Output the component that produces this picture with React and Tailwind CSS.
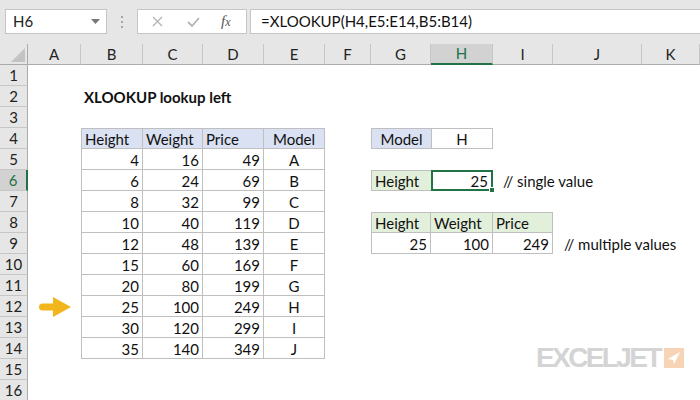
import React from 'react'

// Excel-style sheet: XLOOKUP lookup left

const COLS = ['A', 'B', 'C', 'D', 'E', 'F', 'G', 'H', 'I', 'J', 'K']

const DATA = [
  [4, 16, 49, 'A'],
  [6, 24, 69, 'B'],
  [8, 32, 99, 'C'],
  [10, 40, 119, 'D'],
  [12, 48, 139, 'E'],
  [15, 60, 169, 'F'],
  [20, 80, 199, 'G'],
  [25, 100, 249, 'H'],
  [30, 120, 299, 'I'],
  [35, 140, 349, 'J'],
]

const BASE = 'flex items-center pt-[2px] px-[3px] whitespace-nowrap text-[15px] text-[#111]'
const B = 'border-[#bfbfbf]'

// build the cell map once
const cells = {}
cells.B2 = { v: 'XLOOKUP lookup left', cls: 'font-bold text-[14px]' }
;['Height', 'Weight', 'Price'].forEach((h, i) => {
  cells[COLS[i + 1] + 4] = { v: h, cls: `bg-[#d9e1f2] border-r border-b border-t ${B} ${i === 0 ? 'border-l' : ''}` }
})
cells.E4 = { v: 'Model', cls: `bg-[#d9e1f2] justify-center border-r border-b border-t ${B}` }
DATA.forEach((row, ri) => {
  const r = ri + 5
  row.forEach((v, ci) => {
    const col = COLS[ci + 1]
    cells[col + r] = {
      v,
      cls: `${ci === 3 ? 'justify-center' : 'justify-end'} border-r border-b ${B} ${ci === 0 ? 'border-l' : ''}`,
    }
  })
})
cells.G4 = { v: 'Model', cls: `bg-[#d9e1f2] justify-center border border-r-0 ${B}` }
cells.H4 = { v: 'H', cls: `justify-center border ${B}` }
cells.G6 = { v: 'Height', cls: `bg-[#e2efda] border border-r-0 ${B}` }
cells.H6 = { v: 25, cls: 'justify-end relative border-2 border-[#217346]', active: true }
cells.I6 = { v: '// single value', cls: 'pl-[10px] text-[#8a8a8a]' }
cells.G8 = { v: 'Height', cls: `bg-[#e2efda] border-l border-t border-r border-b ${B}` }
cells.H8 = { v: 'Weight', cls: `bg-[#e2efda] border-t border-r border-b ${B}` }
cells.I8 = { v: 'Price', cls: `bg-[#e2efda] border-t border-r border-b ${B}` }
cells.G9 = { v: 25, cls: `justify-end border-l border-r border-b ${B}` }
cells.H9 = { v: 100, cls: `justify-end border-r border-b ${B}` }
cells.I9 = { v: 249, cls: `justify-end border-r border-b ${B}` }
cells.J9 = { v: '// multiple values', cls: 'pl-[11px] text-[#8a8a8a]' }

function Toolbar() {
  return (
    <div className="h-[44px] bg-[#e6e6e6] flex items-start pt-[9px] pl-[5px]">
      <div className="w-[102px] h-[25px] bg-white border border-[#c6c6c6] flex items-center justify-between pl-[7px] pr-[6px] text-[15px] text-[#222]">
        <span>H6</span>
        <svg width="9" height="5" viewBox="0 0 9 5"><path d="M0 0h9L4.5 5z" fill="#777" /></svg>
      </div>
      <div className="w-[30px] h-[25px] flex flex-col items-center justify-center gap-[3px]">
        <span className="w-[2px] h-[2px] bg-[#a5a5a5]" />
        <span className="w-[2px] h-[2px] bg-[#a5a5a5]" />
        <span className="w-[2px] h-[2px] bg-[#a5a5a5]" />
      </div>
      <div className="w-[110px] h-[25px] bg-white border border-[#c6c6c6] flex items-center">
        <svg className="ml-[14px]" width="11" height="11" viewBox="0 0 11 11">
          <path d="M1 1l9 9M10 1l-9 9" stroke="#b5b5b5" strokeWidth="1.4" />
        </svg>
        <svg className="ml-[24px]" width="13" height="10" viewBox="0 0 13 10">
          <path d="M1 5l4 4 7-8" stroke="#b5b5b5" strokeWidth="1.8" fill="none" />
        </svg>
        <span className="ml-[21px] italic text-[15px] text-[#555]" style={{ fontFamily: '"Liberation Serif", serif' }}>
          f<span className="text-[12px]">x</span>
        </span>
      </div>
      <div className="ml-[3px] flex-1 h-[25px] bg-white border border-[#c6c6c6] border-r-0 flex items-center pl-[10px] text-[15px] text-[#111]">
        =XLOOKUP(H4,E5:E14,B5:B14)
      </div>
    </div>
  )
}

function Arrow() {
  return (
    <svg width="33" height="20" viewBox="0 0 33 20" className="absolute left-[39px] top-[297px]">
      <path d="M3.5 10H16" stroke="#f2b51c" strokeWidth="7" strokeLinecap="round" />
      <path d="M14 0L32 10L14 20z" fill="#f2b51c" />
    </svg>
  )
}

function Logo() {
  return (
    <div className="absolute left-[536px] top-[346px] flex items-center">
      <span
        className="text-[28px] leading-[24px] font-black text-[#d4d4d4] tracking-[-2.6px]"
        style={{ fontFamily: '"Liberation Sans", Arial, sans-serif' }}
      >
        EXCELJET
      </span>
      <div className="shrink-0 w-[20px] h-[20px] bg-[#f8d4b6] ml-[4px] flex items-center justify-center">
        <svg width="14" height="14" viewBox="0 0 14 14">
          <path d="M13 1L1 8l5 1 1 4z" fill="#fff" />
        </svg>
      </div>
    </div>
  )
}

export default function App() {
  const rows = Array.from({ length: 16 }, (_, i) => i + 1)
  return (
    <div
      className="w-[700px] h-[400px] overflow-hidden bg-white relative"
      style={{ fontFamily: 'Lato, "Liberation Sans", sans-serif' }}
    >
      <Toolbar />
      <div className="grid grid-cols-[28px_53px_62px_60px_61px_61px_46px_60px_62px_60px_89px_58px] grid-rows-[repeat(17,21px)]">
        {/* corner */}
        <div className="bg-[#e6e6e6] border-r border-b border-[#ababab] flex items-end justify-end p-[2px]">
          <svg width="14" height="14" viewBox="0 0 14 14"><path d="M14 0V14H0z" fill="#c3c3c3" /></svg>
        </div>
        {COLS.map((c) =>
          c === 'H' ? (
            <div key={c} className="bg-[#d2d2d2] border-r border-[#c6c6c6] border-b-2 border-b-[#217346] flex items-center justify-center text-[15px] text-[#217346]">
              {c}
            </div>
          ) : (
            <div key={c} className="bg-[#e6e6e6] border-r border-[#c6c6c6] border-b border-b-[#ababab] flex items-center justify-center text-[15px] text-[#222]">
              {c}
            </div>
          )
        )}
        {rows.map((r) => (
          <React.Fragment key={r}>
            {r === 6 ? (
              <div className="bg-[#d2d2d2] border-b border-[#c6c6c6] border-r-2 border-r-[#217346] flex items-center justify-center text-[15px] text-[#217346]">
                {r}
              </div>
            ) : (
              <div className="bg-[#e6e6e6] border-b border-[#c6c6c6] border-r border-r-[#ababab] flex items-center justify-center text-[15px] text-[#222]">
                {r}
              </div>
            )}
            {COLS.map((c) => {
              const cell = cells[c + r]
              if (!cell) return <div key={c} />
              return (
                <div key={c} className={`${BASE} ${cell.cls}`}>
                  {cell.v}
                  {cell.active && (
                    <span className="absolute -right-[4px] -bottom-[4px] w-[6px] h-[6px] bg-[#217346] border border-white" />
                  )}
                </div>
              )
            })}
          </React.Fragment>
        ))}
      </div>
      <Arrow />
      <Logo />
    </div>
  )
}
